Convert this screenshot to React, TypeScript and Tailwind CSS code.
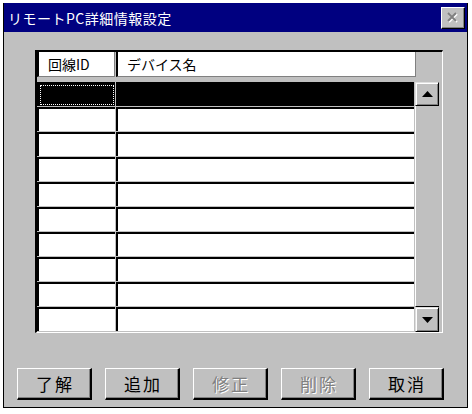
import React from 'react'

const rows = Array.from({ length: 10 }, (_, i) => i)

function Arrow({ up }: { up: boolean }) {
  return (
    <svg width="11" height="6" viewBox="0 0 11 6">
      {up ? <polygon points="5.5,0 11,6 0,6" fill="#000" /> : <polygon points="0,0 11,0 5.5,6" fill="#000" />}
    </svg>
  )
}

function ScrollButton({ up, h }: { up: boolean; h: string }) {
  return (
    <div
      className={`${h} w-[24px] flex items-center justify-center bg-[#c0c0c0] border-t border-l border-t-[#dfdfdf] border-l-[#dfdfdf] border-r border-b border-r-black border-b-black shadow-[inset_1px_1px_0_#fff,inset_-1px_-1px_0_#808080]`}
    >
      <Arrow up={up} />
    </div>
  )
}

function Btn({ label, disabled }: { label: string; disabled?: boolean }) {
  return (
    <button
      className={`w-[75px] h-[32px] flex items-center justify-center bg-[#c0c0c0] border-t border-l border-t-white border-l-white border-r-2 border-b-2 border-r-black border-b-black shadow-[inset_-1px_-1px_0_#808080] text-[17px] tracking-[2px] pl-[2px] ${
        disabled ? 'text-[#808080] [text-shadow:1px_1px_0_#fff]' : 'text-black'
      }`}
    >
      {label}
    </button>
  )
}

export default function App() {
  return (
    <div className="w-[472px] h-[414px] bg-white pt-[3px] pl-[3px]" style={{ fontFamily: '"Noto Sans CJK JP", "Noto Sans", sans-serif' }}>
      <div className="w-[465px] h-[405px] bg-[#c0c0c0] border-l border-r border-b border-black flex flex-col">
        {/* title bar */}
        <div className="h-[29px] bg-[#000080] flex items-center justify-between pl-[4px] pr-[2px]">
          <span className="text-white text-[14px] leading-none tracking-[0.5px]">リモートPC詳細情報設定</span>
          <div className="w-[24px] h-[22px] flex items-center justify-center bg-[#c0c0c0] border-t border-l border-t-white border-l-white border-r border-b border-r-black border-b-black shadow-[inset_-1px_-1px_0_#808080]">
            <svg width="12" height="11" viewBox="0 0 12 11">
              <path d="M2 2 L10 10 M10 2 L2 10" stroke="#fff" strokeWidth="2" />
              <path d="M1 1 L9 9 M9 1 L1 9" stroke="#808080" strokeWidth="2" />
            </svg>
          </div>
        </div>

        {/* grid */}
        <div className="mt-[18px] ml-[31px] w-[408px] h-[283px] border-t-2 border-l-2 border-t-black border-l-black border-r border-b border-r-white border-b-white flex flex-col">
          <div className="h-[30px] flex items-start">
            <div className="w-[78px] h-[25px] bg-white border-l-2 border-black border-r border-b border-r-[#808080] border-b-[#808080] flex items-center pl-[9px] text-[14px] leading-none mr-[1px]">
              回線ID
            </div>
            <div className="w-[300px] h-[25px] bg-white border-l-2 border-black border-r border-b border-r-[#808080] border-b-[#808080] flex items-center pl-[9px] text-[14px] leading-none">
              デバイス名
            </div>
          </div>
          <div className="flex">
            <div className="flex flex-col w-[378px]">
              {rows.map((i) => (
                <div key={i} className="h-[25px] flex">
                  <div
                    className={`w-[78px] h-[24px] border-t-2 border-l-2 border-black mr-[1px] ${
                      i === 0 ? 'bg-black p-[1px]' : 'bg-white'
                    }`}
                  >
                    {i === 0 && <div className="h-full border border-dotted border-white" />}
                  </div>
                  <div className={`w-[298px] h-[24px] border-t-2 border-l-2 border-black ${i === 0 ? 'bg-black' : 'bg-white'}`} />
                </div>
              ))}
            </div>
            <div className="w-[24px] h-[250px] flex flex-col">
              <ScrollButton up h="h-[24px]" />
              <div className="flex-1 bg-[#c0c0c0] border-l border-white border-b border-b-black" />
              <ScrollButton up={false} h="h-[25px]" />
            </div>
          </div>
        </div>

        {/* buttons */}
        <div className="mt-[35px] ml-[13px] flex gap-[13px]">
          <Btn label="了解" />
          <Btn label="追加" />
          <Btn label="修正" disabled />
          <Btn label="削除" disabled />
          <Btn label="取消" />
        </div>
      </div>
    </div>
  )
}
